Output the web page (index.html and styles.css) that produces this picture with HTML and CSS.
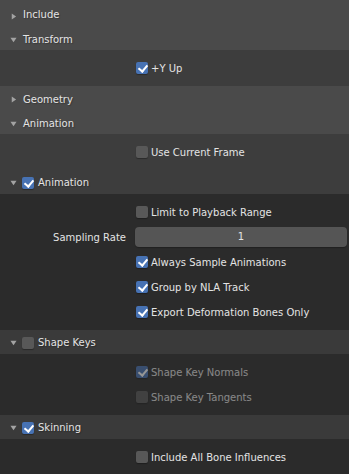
FILE: index.html
```html
<!DOCTYPE html>
<html lang="en">
<head>
    <meta charset="UTF-8">
    <meta name="viewport" content="width=device-width, initial-scale=1.0">
    <title>glTF Export Options</title>
    <link rel="stylesheet" href="styles.css">
</head>
<body>
    <div class="panel first">
        <div class="panel-header">
            <svg class="arrow" viewBox="0 0 8 8"><path d="M2 0.5 L7 4 L2 7.5 Z"/></svg>
            <span>Include</span>
        </div>
    </div>

    <div class="panel">
        <div class="panel-header">
            <svg class="arrow" viewBox="0 0 8 8"><path d="M0.5 2 L7.5 2 L4 7 Z"/></svg>
            <span>Transform</span>
        </div>
        <div class="panel-body">
            <div class="prop">
                <span class="label"></span>
                <label class="check"><span class="box on"></span>+Y Up</label>
            </div>
        </div>
    </div>

    <div class="panel">
        <div class="panel-header">
            <svg class="arrow" viewBox="0 0 8 8"><path d="M2 0.5 L7 4 L2 7.5 Z"/></svg>
            <span>Geometry</span>
        </div>
    </div>

    <div class="panel">
        <div class="panel-header">
            <svg class="arrow" viewBox="0 0 8 8"><path d="M0.5 2 L7.5 2 L4 7 Z"/></svg>
            <span>Animation</span>
        </div>
        <div class="panel-body">
            <div class="prop">
                <span class="label"></span>
                <label class="check"><span class="box"></span>Use Current Frame</label>
            </div>
        </div>

        <!-- sub panels -->
        <div class="subpanel">
            <div class="sub-header first-sub">
                <svg class="arrow" viewBox="0 0 8 8"><path d="M0.5 2 L7.5 2 L4 7 Z"/></svg>
                <span class="box on"></span>
                <span>Animation</span>
            </div>
            <div class="sub-body">
                <div class="prop">
                    <span class="label"></span>
                    <label class="check"><span class="box"></span>Limit to Playback Range</label>
                </div>
                <div class="prop">
                    <span class="label">Sampling Rate</span>
                    <div class="number">1</div>
                </div>
                <div class="prop">
                    <span class="label"></span>
                    <label class="check"><span class="box on"></span>Always Sample Animations</label>
                </div>
                <div class="prop">
                    <span class="label"></span>
                    <label class="check"><span class="box on"></span>Group by NLA Track</label>
                </div>
                <div class="prop">
                    <span class="label"></span>
                    <label class="check"><span class="box on"></span>Export Deformation Bones Only</label>
                </div>
            </div>
        </div>

        <div class="subpanel">
            <div class="sub-header">
                <svg class="arrow" viewBox="0 0 8 8"><path d="M0.5 2 L7.5 2 L4 7 Z"/></svg>
                <span class="box"></span>
                <span>Shape Keys</span>
            </div>
            <div class="sub-body">
                <div class="prop disabled">
                    <span class="label"></span>
                    <label class="check"><span class="box on"></span>Shape Key Normals</label>
                </div>
                <div class="prop disabled">
                    <span class="label"></span>
                    <label class="check"><span class="box"></span>Shape Key Tangents</label>
                </div>
            </div>
        </div>

        <div class="subpanel">
            <div class="sub-header">
                <svg class="arrow" viewBox="0 0 8 8"><path d="M0.5 2 L7.5 2 L4 7 Z"/></svg>
                <span class="box on"></span>
                <span>Skinning</span>
            </div>
            <div class="sub-body">
                <div class="prop">
                    <span class="label"></span>
                    <label class="check"><span class="box"></span>Include All Bone Influences</label>
                </div>
            </div>
        </div>
    </div>
</body>
</html>
```

FILE: styles.css
```css
/* Blender style option panels */
* {
    box-sizing: border-box;
}

body {
    margin: 0;
    padding: 0;
    background-color: #2b2b2b;
    color: #e4e4e4;
    font-family: "DejaVu Sans", sans-serif;
    font-size: 10px;
    overflow: hidden;
}

.panel-header {
    display: flex;
    align-items: center;
    height: 24px;
    background-color: #4a4a4a;
    padding-left: 10px;
    padding-top: 2px;
    text-shadow: 1px 1px 1px rgba(0, 0, 0, 0.25);
}

.panel.first .panel-header {
    height: 26px;
    padding-top: 0;
    align-items: flex-end;
}

.panel.first .panel-header span,
.panel.first .panel-header .arrow {
    margin-bottom: 6px;
}

.arrow {
    width: 7px;
    height: 7px;
    fill: #a3a3a3;
    margin-right: 6px;
    flex-shrink: 0;
}

.panel-body {
    background-color: #3d3d3d;
    padding: 6px 2px 6px 0;
    display: flex;
    flex-direction: column;
    gap: 1px;
}

.sub-header {
    display: flex;
    align-items: center;
    height: 24px;
    background-color: #3a3a3a;
    padding-left: 10px;
    padding-top: 1px;
    text-shadow: 1px 1px 1px rgba(0, 0, 0, 0.25);
}

.sub-header.first-sub {
    background-color: #3d3d3d;
}

.sub-header .arrow {
    margin-right: 5px;
}

.sub-header .box {
    margin-right: 4px;
}

.sub-body {
    background-color: #2b2b2b;
    padding: 6px 2px 6px 0;
    display: flex;
    flex-direction: column;
    gap: 1px;
}

.prop {
    display: grid;
    grid-template-columns: 135px 1fr;
    align-items: center;
    height: 24px;
}

.label {
    text-align: right;
    padding-right: 9px;
}

.check {
    display: flex;
    align-items: center;
    padding-left: 1px;
}

.box {
    width: 12px;
    height: 12px;
    border-radius: 2px;
    background-color: #585858;
    margin-right: 3px;
    position: relative;
    flex-shrink: 0;
    box-shadow: 0 1px 1px rgba(0, 0, 0, 0.3);
}

.box.on {
    background-color: #4772b3;
}

.box.on::after {
    content: "";
    position: absolute;
    left: 4px;
    top: 1px;
    width: 4px;
    height: 7px;
    border: solid #fff;
    border-width: 0 2px 2px 0;
    transform: rotate(40deg);
}

.number {
    height: 20px;
    line-height: 20px;
    background-color: #555;
    border-radius: 4px;
    text-align: center;
    box-shadow: 0 1px 1px rgba(0, 0, 0, 0.25);
}

.disabled {
    opacity: 0.5;
}
```
